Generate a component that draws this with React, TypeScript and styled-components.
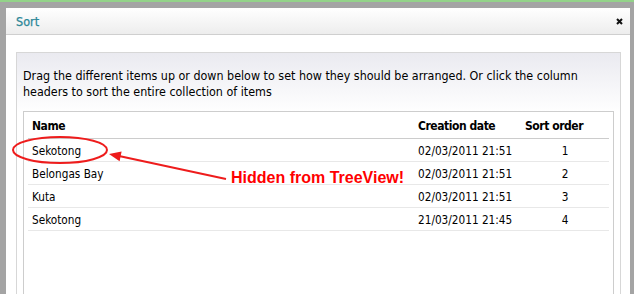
import React from "react";
import styled, { createGlobalStyle } from "styled-components";

const Global = createGlobalStyle`
  html, body { margin: 0; padding: 0; }
  body { width: 634px; height: 294px; overflow: hidden; font-family: "DejaVu Sans Condensed", "DejaVu Sans", sans-serif; }
`;

const Frame = styled.div`
  position: relative;
  box-sizing: border-box;
  width: 634px;
  height: 294px;
  background: #a4a4a4;
  border-top: 2px solid #93d389;
  padding: 6px 4px 0 6px;
  display: flex;
`;

const Dialog = styled.div`
  flex: 1;
  background: #fff;
  display: flex;
  flex-direction: column;
  min-width: 0;
`;

const TitleBar = styled.div`
  box-sizing: border-box;
  height: 27px;
  border-bottom: 1px solid #cfcfcf;
  background: linear-gradient(#ffffff, #ededed);
  display: flex;
  align-items: center;
  justify-content: space-between;
  padding: 0 7px 0 10px;
`;

const Title = styled.span`
  color: #2b8797;
  font-size: 12.5px;
  -webkit-text-stroke: 0.25px #2b8797;
`;

const Close = styled.svg`
  width: 7px;
  height: 7px;
`;

const Body = styled.div`
  flex: 1;
  display: flex;
  padding: 17px 10px 0 10px;
  min-height: 0;
`;

const ContentBox = styled.div`
  flex: 1;
  border: 1px solid #d7d7d7;
  border-bottom: none;
  background: linear-gradient(#eaeaf0 0px, #ffffff 60px);
  padding: 15px 6px 0 6px;
  display: flex;
  flex-direction: column;
`;

const Intro = styled.p`
  margin: 0 0 11px 0;
  font-size: 12.4px;
  line-height: 16px;
  color: #000;
`;

const TableBox = styled.div`
  flex: 1;
  border: 1px solid #cdcdcd;
  border-bottom: none;
  background: #fff;
  padding: 0 4px;
`;

const Row = styled.div<{ $head?: boolean }>`
  display: grid;
  grid-template-columns: 386px 107px 88px;
  height: ${(p) => (p.$head ? "27px" : "23px")};
  box-sizing: border-box;
  border-bottom: 1px solid ${(p) => (p.$head ? "#cccccc" : "#e8e8e8")};
  align-items: center;
  font-size: ${(p) => (p.$head ? "12px" : "11.7px")};
  font-weight: ${(p) => (p.$head ? "bold" : "normal")};
  letter-spacing: ${(p) => (p.$head ? "-0.45px" : "0")};
  color: #000;
`;

const Cell = styled.div<{ $center?: boolean }>`
  padding: 1px 4px 0 4px;
  text-align: ${(p) => (p.$center ? "center" : "left")};
  white-space: nowrap;
`;

const Overlay = styled.svg`
  position: absolute;
  left: 0;
  top: 0;
  width: 634px;
  height: 294px;
  pointer-events: none;
`;

const Note = styled.div`
  position: absolute;
  left: 231px;
  top: 166px;
  font-family: "Liberation Sans", Arial, sans-serif;
  font-weight: bold;
  font-size: 16px;
  line-height: 20px;
  color: #ff0000;
  white-space: nowrap;
`;

const rows = [
  { name: "Sekotong", date: "02/03/2011 21:51", order: 1 },
  { name: "Belongas Bay", date: "02/03/2011 21:51", order: 2 },
  { name: "Kuta", date: "02/03/2011 21:51", order: 3 },
  { name: "Sekotong", date: "21/03/2011 21:45", order: 4 },
];

export default function App() {
  return (
    <>
      <Global />
      <Frame>
        <Dialog>
          <TitleBar>
            <Title>Sort</Title>
            <Close viewBox="0 0 7 7">
              <path d="M1 1 L6 6 M6 1 L1 6" stroke="#111" strokeWidth="2" />
            </Close>
          </TitleBar>
          <Body>
            <ContentBox>
              <Intro>
                Drag the different items up or down below to set how they should be arranged. Or click the column
                headers to sort the entire collection of items
              </Intro>
              <TableBox>
                <Row $head>
                  <Cell>Name</Cell>
                  <Cell>Creation date</Cell>
                  <Cell>Sort order</Cell>
                </Row>
                {rows.map((r, i) => (
                  <Row key={i}>
                    <Cell>{r.name}</Cell>
                    <Cell>{r.date}</Cell>
                    <Cell $center>{r.order}</Cell>
                  </Row>
                ))}
              </TableBox>
            </ContentBox>
          </Body>
        </Dialog>
        <Overlay viewBox="0 0 634 294">
          <ellipse cx="60" cy="148" rx="47" ry="13" fill="none" stroke="#ee1c1c" strokeWidth="2" />
          <line x1="119" y1="154" x2="226" y2="177" stroke="#ee1c1c" strokeWidth="2" />
          <polygon points="109,152 121.6,149.6 119.6,159.2" fill="#ee1c1c" />
        </Overlay>
        <Note>Hidden from TreeView!</Note>
      </Frame>
    </>
  );
}
